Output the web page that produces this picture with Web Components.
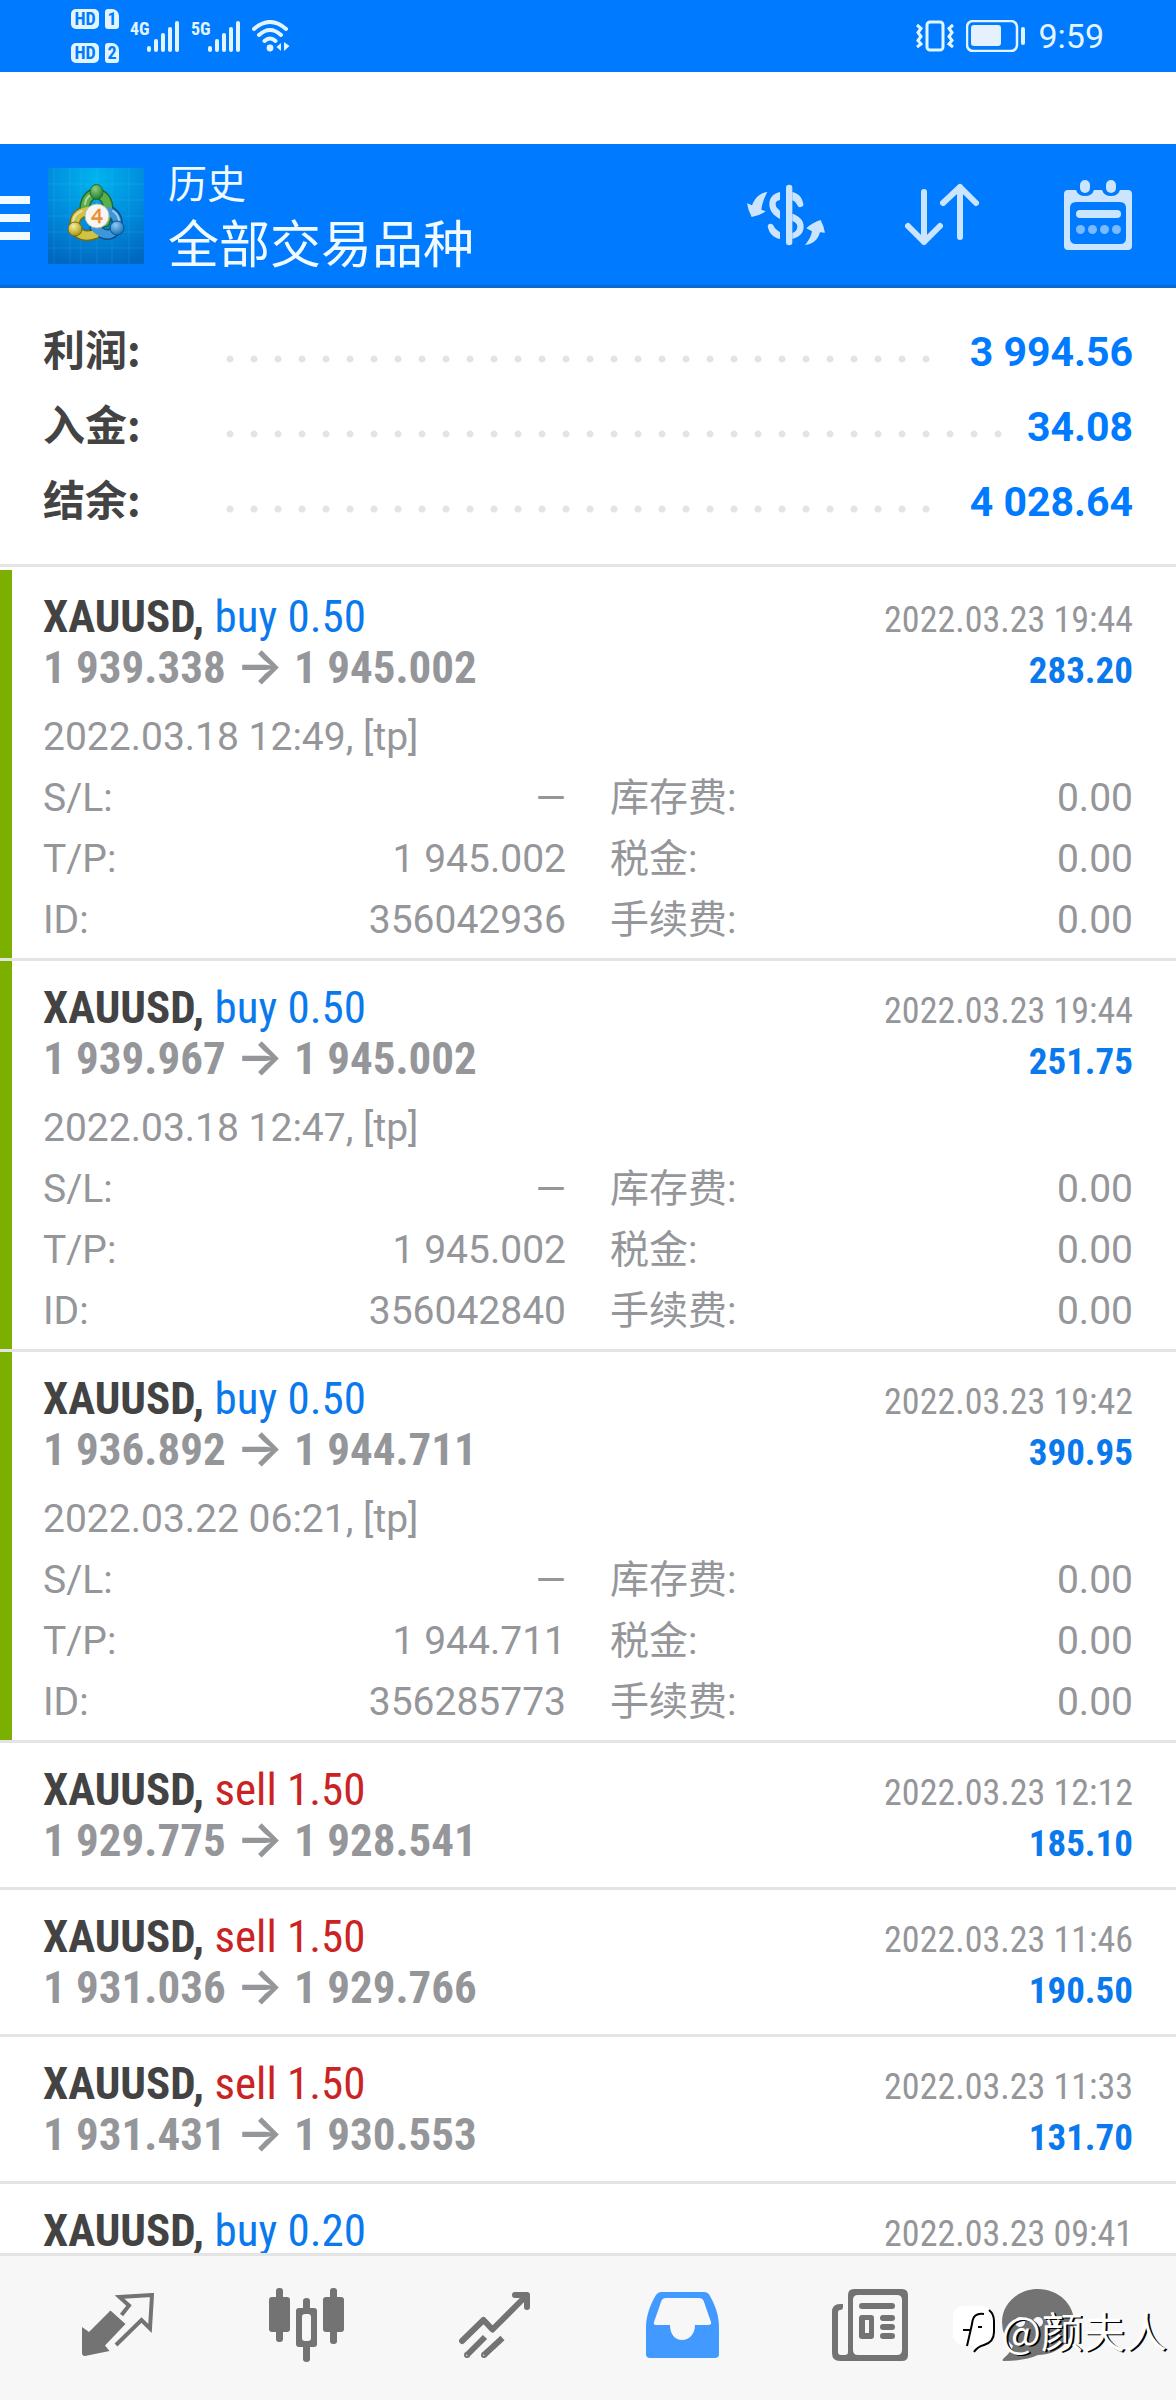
<!DOCTYPE html>
<html lang="zh-CN">
<head>
<meta charset="utf-8">
<meta name="viewport" content="width=device-width, initial-scale=1">
<title>历史</title>
<style>
  :root {
    --blue: #007aff;
    --pale: #e2f5ff;
    --ink: #434343;
    --grey: #95969a;
    --line: #e4e4e4;
    --buy: #0b79ee;
    --sell: #cb2323;
    --sans: Roboto, "Noto Sans CJK SC", sans-serif;
    --cjk: "Noto Sans CJK SC", sans-serif;
    --condensed: "Roboto Condensed", "Liberation Sans Narrow", Roboto, sans-serif;
  }
  body { margin: 0; font-family: var(--sans); background: #fff; }
</style>
</head>
<body>
<history-app></history-app>

<script>
const define = (name, render) => customElements.define(name, class extends HTMLElement {
  connectedCallback() {
    if (this.shadowRoot) return;
    this.attachShadow({ mode: 'open' }).innerHTML =
      '<style>*{box-sizing:border-box}svg{display:block}</style>' + render(this);
  }
});

/* ---------- status bar ---------- */
const signal = `
  <svg width="33" height="31" viewBox="0 0 33 31" fill="currentColor">
    <rect x="0" y="25" width="4" height="6" rx="2"/><rect x="7" y="18" width="4" height="13" rx="2"/>
    <rect x="14" y="12" width="4" height="19" rx="2"/><rect x="21" y="6" width="4" height="25" rx="2"/>
    <rect x="28" y="0" width="4" height="31" rx="2"/>
  </svg>`;

define('status-bar', () => `
  <style>
    :host { display: flex; align-items: center; height: 72px; padding: 0 72px 0 71px;
            background: var(--blue); color: var(--pale); }
    .sims { display: grid; grid-template-columns: 28px 14px; gap: 14px 6px; margin-right: 11px; }
    .sims span { height: 20px; border-radius: 5px; background: var(--pale); color: var(--blue);
                 font: 700 18px/20px var(--condensed); text-align: center; }
    .sims .slot { border-radius: 3px 7px 3px 3px; }
    .net { display: flex; align-items: flex-start; margin-right: 11px; }
    .net b { width: 17px; font: 700 18px/16px var(--condensed); }
    .spacer { flex: 1; }
    .right { display: flex; align-items: center; gap: 12px; }
    time { font: 400 34px/40px var(--sans); }
  </style>
  <div class="sims"><span>HD</span><span class="slot">1</span><span>HD</span><span class="slot">2</span></div>
  <div class="net"><b>4G</b>${signal}</div>
  <div class="net"><b>5G</b>${signal}</div>
  <svg width="38" height="32" viewBox="0 0 38 32" fill="none" stroke="currentColor" stroke-width="4" stroke-linecap="round">
    <path d="M2 9Q18-5 34 9M7 15Q18 5 29 15M12.500 21Q18 16 23.500 21"/>
    <circle cx="18" cy="28" r="3.400" fill="currentColor" stroke="none"/>
    <path d="M29 23V31L24.500 27ZM32 22V31L37.500 26Z" fill="currentColor" stroke="none"/>
  </svg>
  <div class="spacer"></div>
  <div class="right">
    <svg width="38" height="32" viewBox="0 0 38 32" fill="none" stroke="currentColor" stroke-width="3">
      <rect x="11" y="2" width="16" height="28" rx="3"/>
      <path d="M1 5L5 8.500L2 12.500L5 16.500L2 20.500L5 24L1 27M37 5L33 8.500L36 12.500L33 16.500L36 20.500L33 24L37 27"/>
    </svg>
    <svg width="60" height="32" viewBox="0 0 60 32">
      <rect x="1" y="1" width="50" height="30" rx="6" fill="none" stroke="currentColor" stroke-width="2.500"/>
      <rect x="5" y="5" width="30" height="21" rx="3" fill="#e5f1ff"/>
      <rect x="55" y="7" width="4" height="18" rx="2" fill="currentColor"/>
    </svg>
    <time>9:59</time>
  </div>`);

/* ---------- header ---------- */
const logo = `
  <svg width="96" height="96" viewBox="0 0 96 96" role="img" aria-label="MetaTrader 4">
    <defs>
      <radialGradient id="sky" cx=".5" cy=".1" r=".95"><stop offset="0" stop-color="#00b4ee"/><stop offset=".55" stop-color="#008bdc"/><stop offset="1" stop-color="#0067bf"/></radialGradient>
      <radialGradient id="gb" cx=".4" cy=".3" r=".7"><stop offset="0" stop-color="#8fce80"/><stop offset="1" stop-color="#1f7d34"/></radialGradient>
      <radialGradient id="yb" cx=".4" cy=".3" r=".7"><stop offset="0" stop-color="#f8f0a0"/><stop offset="1" stop-color="#a89412"/></radialGradient>
      <radialGradient id="bb" cx=".4" cy=".3" r=".7"><stop offset="0" stop-color="#8ecbf4"/><stop offset="1" stop-color="#1470b8"/></radialGradient>
    </defs>
    <rect width="96" height="96" fill="url(#sky)"/>
    <path d="M6 0V96M22 0V96M33 0V96M49 0V96M64 0V96M81 0V96M0 16H96M0 32H96M0 48H96M0 64H96M0 80H96" stroke="#5fd0ff" stroke-opacity=".16"/>
    <g fill="none" stroke-linecap="round">
      <g stroke-width="11"><path d="M37 43C35 20 62 20 60 44L57 54" stroke="#1d6e2c"/><path d="M27 60Q25 45 40 43M27 60Q32 71 47 66L49 60" stroke="#766a10"/><path d="M69 60Q71 48 61 43M69 60Q61 73 47 60" stroke="#0e4f8c"/></g>
      <g stroke-width="8"><path d="M37 43C35 20 62 20 60 44L57 54" stroke="#5cae4c"/><path d="M27 60Q25 45 40 43M27 60Q32 71 47 66L49 60" stroke="#cfc244"/><path d="M69 60Q71 48 61 43M69 60Q61 73 47 60" stroke="#3c96d8"/></g>
      <path d="M37 36Q38 29 43 27M25 54Q26 46 34 43M71 54Q71 47 65 43" stroke-width="2" stroke="#fff" stroke-opacity=".5"/>
    </g>
    <ellipse cx="48.500" cy="24" rx="6.500" ry="7.500" fill="url(#gb)" stroke="#1d6e2c"/>
    <circle cx="27" cy="61" r="7" fill="url(#yb)" stroke="#766a10"/>
    <circle cx="69" cy="60" r="7" fill="url(#bb)" stroke="#0e4f8c"/>
    <circle cx="49" cy="48" r="12" fill="#f6f6f4" stroke="#b9b9a8"/>
    <text x="49" y="55" text-anchor="middle" font-family="Open Sans, sans-serif" font-size="20" fill="#f08a2c" stroke="#f08a2c" stroke-width=".6">4</text>
  </svg>`;

define('icon-button', el => `
  <style>
    :host { display: block; }
    button { display: grid; place-items: center; width: 100%; height: 100%; padding: 0;
             border: 0; background: none; color: inherit; cursor: pointer; }
  </style>
  <button type="button" aria-label="${el.getAttribute('label')}"><slot></slot></button>`);

define('app-header', () => `
  <style>
    :host { display: flex; align-items: stretch; height: 144px; background: var(--blue); color: #f0faff;
            border-bottom: 3px solid #0d69cf; }
    .menu { width: 30px; margin-right: 18px; padding-top: 6px; }
    .logo { align-self: center; margin: 3px 24px 0 0; }
    .titles { flex: 1; padding-top: 9px; font-family: var(--cjk); }
    p, h1 { margin: 0; font-weight: 400; }
    p { font-size: 39px; line-height: 56px; }
    h1 { font-size: 51px; line-height: 64px; }
    .action { width: 156px; color: #cce5ff; }
  </style>
  <icon-button class="menu" label="菜单">
    <svg width="30" height="44" viewBox="0 0 30 44" fill="currentColor"><path d="M0 0H30V8H0ZM0 18H30V26H0ZM0 36H30V44H0Z"/></svg>
  </icon-button>
  <div class="logo">${logo}</div>
  <div class="titles"><p>历史</p><h1>全部交易品种</h1></div>
  <icon-button class="action" label="交易品种">
    <svg width="78" height="62" viewBox="21 39 234 186" fill="currentColor">
      <path d="M120 63C98 68 88 82 88 100S100 134 120 144V119C112 113 107 108 107 100S112 88 120 87ZM157 63C172 66 185 76 189 95A9 9 0 0 1 172 103C168 95 164 90 157 88ZM157 128C176 134 191 146 191 167S176 198 157 204V186C166 182 172 176 172 167S166 154 157 150ZM83 166A9 9 0 0 1 100 163C103 171 110 177 120 184V204C102 201 87 188 83 166Z"/>
      <rect x="138" y="41" width="19" height="182" rx="9"/>
      <path d="M82 63C68 90 66 104 64 116L77 121Q60 134 35 138Q24 118 21 97L36 103C44 82 58 66 82 63ZM195 222C209 206 214 192 216 181L199 172Q216 155 242 147Q252 166 255 185L240 184C234 204 222 220 195 222Z"/>
    </svg>
  </icon-button>
  <icon-button class="action" label="排序">
    <svg width="74" height="63" viewBox="0 0 74 63" fill="none" stroke="currentColor" stroke-width="6" stroke-linecap="round" stroke-linejoin="round">
      <path d="M19 9V59M3 43L19 59L35 43M55 54V4M38 20L55 4L71 20"/>
    </svg>
  </icon-button>
  <icon-button class="action" label="日期">
    <svg width="69" height="70" viewBox="0 0 69 70" fill="currentColor">
      <path fill-rule="evenodd" d="M4 10H12Q14 16 21 16T30 10H38Q40 16 47 16T56 10H64Q68 10 68 14V66Q68 70 64 70H4Q0 70 0 66V14Q0 10 4 10ZM12 22Q6 22 6 28V58Q6 64 12 64H56Q62 64 62 58V28Q62 22 56 22Z"/>
      <rect x="16" width="10" height="13" rx="5"/><rect x="42" width="10" height="13" rx="5"/>
      <rect x="12" y="30" width="45" height="8" rx="4"/>
      <g opacity=".6"><circle cx="16.500" cy="49.500" r="4.500"/><circle cx="28.500" cy="49.500" r="4.500"/><circle cx="40.500" cy="49.500" r="4.500"/><circle cx="52.500" cy="49.500" r="4.500"/></g>
    </svg>
  </icon-button>`);

/* ---------- balance summary ---------- */
define('summary-row', el => `
  <style>
    :host { display: grid; grid-template-columns: 175px 1fr auto; height: 75px; align-items: baseline; }
    .label { font: 700 42px/60px var(--cjk); color: var(--ink); }
    .dots { align-self: start; margin-right: 12px; }
    .dots i { display: block; width: round(down, 100%, 24px); height: 8px; margin-top: 37px;
              background: radial-gradient(circle, #e4e4e4 3px, transparent 4px) 0 0 / 24px 8px; }
    .value { font: 700 41px/60px var(--sans); color: var(--blue); }
  </style>
  <span class="label">${el.getAttribute('label')}</span><span class="dots"><i></i></span>
  <span class="value"><slot></slot></span>`);

/* ---------- one deal ---------- */
define('trade-item', el => {
  const a = n => el.getAttribute(n);
  const pair = (k, v) => `<div><dt>${k}</dt><dd>${v}</dd></div>`;
  const prices = a('from') ? `
    <div class="row"><span class="price">${a('from')} <span class="arrow">→</span> ${a('to')}</span><b class="profit">${a('profit')}</b></div>` : '';
  const details = a('ticket') ? `
    <p>${a('opened')}, [tp]</p>
    <dl>
      ${pair('S/L:', '—')}${pair('库存费:', '0.00')}
      ${pair('T/P:', a('to'))}${pair('税金:', '0.00')}
      ${pair('ID:', a('ticket'))}${pair('手续费:', '0.00')}
    </dl>` : '';
  return `
  <style>
    :host { display: block; padding: 21px 43px; border-bottom: 3px solid var(--line); color: var(--grey); }
    :host([ticket]) { padding-bottom: 7px; background: linear-gradient(#7cb000, #7cb000) 0 0 / 12px 100% no-repeat; }
    .row { display: flex; justify-content: space-between; align-items: baseline; height: 51px;
           font: 400 45px/51px var(--condensed); white-space: nowrap; }
    .symbol { color: var(--ink); font-weight: 700; }
    .side { color: var(--${a('side')}); }
    time { font-size: 36px; }
    .price { font-weight: 700; }
    .arrow { font-family: Inter, var(--cjk); font-size: 50px; font-weight: 600; line-height: 0; }
    .profit { font-size: 37px; color: var(--buy); }
    p, dl { margin: 0; font-size: 39px; line-height: 61px; }
    p { padding-top: 14px; }
    dl { display: grid; grid-template-columns: 1fr 1fr; column-gap: 44px; }
    dl div { display: flex; justify-content: space-between; height: 61px; }
    dd { margin: 0; }
  </style>
  <div class="row"><span><span class="symbol">XAUUSD,</span> <span class="side">${a('side')} ${a('volume')}</span></span><time>${a('closed')}</time></div>
  ${prices}${details}`;
});

/* ---------- bottom tabs ---------- */
define('tab-bar', () => `
  <style>
    :host { display: block; background: #f7f7f7; border-top: 3px solid var(--line); color: #737373; }
    nav { display: grid; grid-template-columns: repeat(5, 188fr) 148fr; height: 144px; padding: 0 64px 6px 24px; }
    .on { color: #4299ff; }
  </style>
  <nav>
    <icon-button label="行情">
      <svg width="72" height="64" viewBox="0 0 72 64" fill="currentColor">
        <path d="M29 18L43.500 31L23 52.500L27.500 58L3 63Q0 63 0 60V34L7 39L27 19Q28 17 29 18Z"/>
        <path d="M39.500 22L47 12.500L37.500 4L70 2L68 35.500L59.500 27L34 52" fill="none" stroke="currentColor" stroke-width="4"/>
      </svg>
    </icon-button>
    <icon-button label="图表">
      <svg width="75" height="74" viewBox="0 0 75 74" fill="currentColor">
        <rect y="9" width="21" height="35" rx="3"/><rect x="7" width="7" height="54" rx="3"/>
        <rect x="54" y="9" width="21" height="35" rx="3"/><rect x="61" width="7" height="56" rx="3"/>
        <path d="M37.500 10Q41 10 41 13V20H45Q48 20 48 23V56Q48 59 45 59H41V71Q41 74 37.500 74T34 71V59H30Q27 59 27 56V23Q27 20 30 20H34V13Q34 10 37.500 10Z"/>
        <rect x="33" y="26" width="9" height="27" rx="3" fill="#f7f7f7"/>
      </svg>
    </icon-button>
    <icon-button label="交易">
      <svg width="71" height="66" viewBox="0 0 71 66" fill="none" stroke="currentColor" stroke-width="6">
        <path d="M3 49L24.500 28L33.500 37.500L66 5" stroke-linecap="round" stroke-linejoin="round"/>
        <path d="M56 3H68V15" stroke-linecap="round" stroke-linejoin="round"/>
        <path d="M8 63L26 45M25 63L43.500 46"/><circle cx="8" cy="63" r="1" stroke-width="4"/><circle cx="25" cy="63" r="1" stroke-width="4"/>
      </svg>
    </icon-button>
    <icon-button class="on" label="历史">
      <svg width="73" height="66" viewBox="0 0 73 66" fill="currentColor">
        <path fill-rule="evenodd" d="M15 0H58Q62 0 64 4C70 15 73 24 73 36V62Q73 66 69 66H4Q0 66 0 62V36C0 24 4 13 10 3Q12 0 15 0ZM20 6Q16 6 15 10L8 30Q7 33 10 33H24C24 42 29 48 36 48S49 42 49 33H62Q66 33 65 30L58 10Q57 6 53 6Z"/>
      </svg>
    </icon-button>
    <icon-button label="新闻">
      <svg width="76" height="72" viewBox="0 0 76 72" fill="currentColor">
        <path fill-rule="evenodd" d="M22 0H70Q76 0 76 6V66Q76 72 70 72H8Q0 72 0 64V23Q0 15 8 15H11V18Q11 21 8 21Q6 21 6 24V63Q6 66 9 66H13Q16 66 16 63V6Q16 0 22 0ZM26 6Q21 6 21 11V61Q21 66 26 66H65Q70 66 70 61V11Q70 6 65 6Z"/>
        <rect x="27" y="14" width="36" height="6" rx="3"/>
        <path fill-rule="evenodd" d="M30 26H39Q42 26 42 29V47Q42 50 39 50H30Q27 50 27 47V29Q27 26 30 26ZM33 31V44H37V31Z"/>
        <rect x="48" y="26" width="15" height="6" rx="3"/><rect x="48" y="35" width="15" height="6" rx="3"/><rect x="48" y="44" width="15" height="6" rx="3"/>
      </svg>
    </icon-button>
    <icon-button label="消息">
      <svg width="72" height="72" viewBox="0 0 72 72">
        <path d="M36 0C56 0 72 15 72 33S56 66 36 66Q22 72 2 72Q-1 72 2 69Q9 63 11 57Q0 48 0 33C0 15 16 0 36 0Z" fill="currentColor"/>
        <g fill="#f7f7f7"><circle cx="18" cy="33" r="5"/><circle cx="36" cy="33" r="5"/><circle cx="54" cy="33" r="5"/></g>
      </svg>
    </icon-button>
  </nav>`);

/* Author stamp laid over the corner of the tab bar */
define('author-stamp', () => `
  <style>
    :host { position: absolute; right: 9px; bottom: 40px; display: flex; align-items: center; gap: 4px;
            font: 400 42px/60px var(--cjk); color: #fff; text-shadow: 2px 1px 0 #000; pointer-events: none; }
  </style>
  <svg width="44" height="48" viewBox="0 0 44 48">
    <path d="M12 0H29Q41 2 41 14V26Q41 36 31 39Q24 41 21 46V39H12Q0 39 0 27V12Q0 0 12 0Z" fill="#fff"/>
    <path d="M36 4Q41 8 41 15V26Q41 36 31 39Q24 41 21 46" fill="none" stroke="#000" stroke-width="2"/>
    <path d="M31 8Q20 6 19 18L14 40M10 24H17M25 21H29" fill="none" stroke="#000" stroke-width="2"/>
  </svg>
  <span>@颜夫人</span>`);

/* ---------- page ---------- */
define('history-app', () => `
  <style>
    :host { position: relative; display: flex; flex-direction: column; height: 100vh; overflow: hidden; }
    app-header { margin-top: 72px; }
    .summary { padding: 30px 43px 21px; border-bottom: 3px solid var(--line); }
    main { flex: 1 1 0; min-height: 0; overflow: hidden; padding-top: 3px; }
  </style>
  <status-bar></status-bar>
  <app-header></app-header>
  <section class="summary">
    <summary-row label="利润:">3 994.56</summary-row>
    <summary-row label="入金:">34.08</summary-row>
    <summary-row label="结余:">4 028.64</summary-row>
  </section>
  <main>
    <trade-item side="buy" volume="0.50" closed="2022.03.23 19:44" from="1 939.338" to="1 945.002" profit="283.20" opened="2022.03.18 12:49" ticket="356042936"></trade-item>
    <trade-item side="buy" volume="0.50" closed="2022.03.23 19:44" from="1 939.967" to="1 945.002" profit="251.75" opened="2022.03.18 12:47" ticket="356042840"></trade-item>
    <trade-item side="buy" volume="0.50" closed="2022.03.23 19:42" from="1 936.892" to="1 944.711" profit="390.95" opened="2022.03.22 06:21" ticket="356285773"></trade-item>
    <trade-item side="sell" volume="1.50" closed="2022.03.23 12:12" from="1 929.775" to="1 928.541" profit="185.10"></trade-item>
    <trade-item side="sell" volume="1.50" closed="2022.03.23 11:46" from="1 931.036" to="1 929.766" profit="190.50"></trade-item>
    <trade-item side="sell" volume="1.50" closed="2022.03.23 11:33" from="1 931.431" to="1 930.553" profit="131.70"></trade-item>
    <trade-item side="buy" volume="0.20" closed="2022.03.23 09:41"></trade-item>
  </main>
  <tab-bar></tab-bar>
  <author-stamp></author-stamp>`);
</script>
</body>
</html>
